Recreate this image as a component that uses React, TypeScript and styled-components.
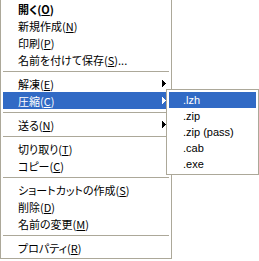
import React from "react";
import styled, { createGlobalStyle } from "styled-components";

const Global = createGlobalStyle`
  html, body { margin: 0; padding: 0; background: #fff; }
  body { font-family: "Noto Sans CJK JP", "Noto Sans", sans-serif; }
`;

const Stage = styled.div`
  position: relative;
  width: 259px;
  height: 261px;
  overflow: hidden;
  background: #fff;
`;

const Menu = styled.div`
  width: 172px;
  box-sizing: border-box;
  border: 1px solid #aca899;
  border-top: none;
  padding: 0 2px 2px;
  background: #fff;
  display: flex;
  flex-direction: column;
`;

const Item = styled.div<{ $active?: boolean; $bold?: boolean }>`
  height: 17px;
  display: flex;
  align-items: center;
  padding: 0 3px 0 15px;
  background: ${(p) => (p.$active ? "#316ac5" : "transparent")};
  color: ${(p) => (p.$active ? "#fff" : "#000")};
  font-family: "Noto Sans CJK JP", sans-serif;
  font-size: 11px;
  font-weight: ${(p) => (p.$bold ? 700 : 400)};
  font-feature-settings: "palt";
  white-space: nowrap;
`;

const Label = styled.span`
  flex: 1;
  line-height: 17px;
  padding-top: 1px;
  u {
    text-decoration: underline;
    text-underline-offset: 1px;
  }
`;

const Separator = styled.div`
  height: 7px;
  display: flex;
  align-items: center;
  &::after {
    content: "";
    flex: 1;
    height: 1px;
    background: #aca899;
  }
`;

const SubMenu = styled.div`
  position: absolute;
  left: 166px;
  top: 89px;
  width: 93px;
  box-sizing: border-box;
  border: 1px solid #aca899;
  padding: 2px;
  background: #fff;
  display: flex;
  flex-direction: column;
`;

const SubItem = styled.div<{ $active?: boolean }>`
  height: 16px;
  display: flex;
  align-items: center;
  padding-left: 14px;
  background: ${(p) => (p.$active ? "#316ac5" : "transparent")};
  color: ${(p) => (p.$active ? "#fff" : "#000")};
  font-family: "Liberation Sans", Arial, sans-serif;
  font-size: 11px;
  white-space: nowrap;
`;

const ArrowSvg = styled.svg`
  display: block;
  flex: none;
`;

function Arrow({ active }: { active?: boolean }) {
  const c = active ? "#fff" : "#000";
  return (
    <ArrowSvg width="4" height="7" viewBox="0 0 4 7" shapeRendering="crispEdges">
      <rect x="0" y="0" width="1" height="7" fill={c} />
      <rect x="1" y="1" width="1" height="5" fill={c} />
      <rect x="2" y="2" width="1" height="3" fill={c} />
      <rect x="3" y="3" width="1" height="1" fill={c} />
    </ArrowSvg>
  );
}

type Entry =
  | { sep: true }
  | { label: string; key: string; suffix?: string; bold?: boolean; sub?: boolean; active?: boolean };

const entries: Entry[] = [
  { label: "開く", key: "O", bold: true },
  { label: "新規作成", key: "N" },
  { label: "印刷", key: "P" },
  { label: "名前を付けて保存", key: "S", suffix: "..." },
  { sep: true },
  { label: "解凍", key: "E", sub: true },
  { label: "圧縮", key: "C", sub: true, active: true },
  { sep: true },
  { label: "送る", key: "N", sub: true },
  { sep: true },
  { label: "切り取り", key: "T" },
  { label: "コピー", key: "C" },
  { sep: true },
  { label: "ショートカットの作成", key: "S" },
  { label: "削除", key: "D" },
  { label: "名前の変更", key: "M" },
  { sep: true },
  { label: "プロパティ", key: "R" },
];

const subEntries = [".lzh", ".zip", ".zip (pass)", ".cab", ".exe"];

export default function App() {
  return (
    <Stage>
      <Global />
      <Menu>
        {entries.map((e, i) =>
          "sep" in e ? (
            <Separator key={i} />
          ) : (
            <Item key={i} $active={e.active} $bold={e.bold}>
              <Label>
                {e.label}(<u>{e.key}</u>){e.suffix ?? ""}
              </Label>
              {e.sub && <Arrow active={e.active} />}
            </Item>
          )
        )}
      </Menu>
      <SubMenu>
        {subEntries.map((s, i) => (
          <SubItem key={s} $active={i === 0}>
            {s}
          </SubItem>
        ))}
      </SubMenu>
    </Stage>
  );
}
